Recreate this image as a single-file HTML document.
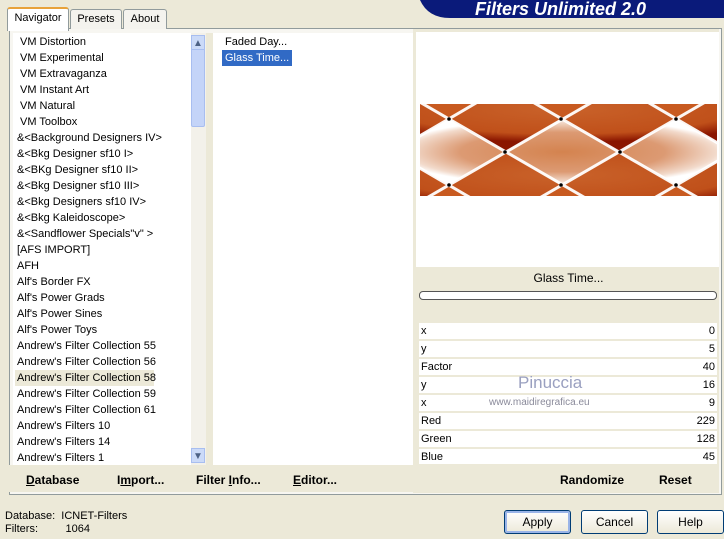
<!DOCTYPE html><html><head><style>
body{margin:0;width:724px;height:539px;background:#ece9d8;font-family:"Liberation Sans",sans-serif;font-size:11px;position:relative;overflow:hidden;color:#000}
.a{position:absolute}
.tab{position:absolute;top:9px;height:19px;border:1px solid #919b9c;border-bottom:none;background:#f4f3ee;text-align:center;line-height:18px;border-radius:3px 3px 0 0}
.li{position:absolute;left:17px;height:16px;line-height:16px;white-space:nowrap}
.row{position:absolute;left:419px;width:298px;height:16px;background:#fff;line-height:16px}
.row span{position:absolute;right:2px}
.row b{font-weight:normal;position:absolute;left:2px}
.btn{position:absolute;top:510px;height:22px;border:1px solid #003c74;border-radius:3px;background:linear-gradient(#fff,#ece9d8);text-align:center;line-height:22px;font-size:12px}
.bb{position:absolute;font-weight:bold;font-size:12px;top:473px}
</style></head><body>
<svg class="a" style="left:420px;top:0" width="304" height="20"><path d="M0 0 H304 V18 H30 Q8 18 0 0Z" fill="#0a1a7a"/><text x="55" y="15" fill="#fff" font-family="Liberation Sans" font-weight="bold" font-style="italic" font-size="18">Filters Unlimited 2.0</text></svg>
<div class="a" style="left:9px;top:28px;width:711px;height:465px;border:1px solid #919b9c;background:#f7f6f1"></div>
<div class="tab" style="left:7px;top:7px;width:60px;height:22px;background:#fff;border-top:2px solid #e8a23a">Navigator</div>
<div class="tab" style="left:70px;width:50px">Presets</div>
<div class="tab" style="left:123px;width:42px">About</div>
<div class="a" style="left:13px;top:33px;width:178px;height:432px;background:#fff"></div>
<div class="a" style="left:191px;top:33px;width:15px;height:432px;background:#f3f1ea"></div>
<div class="a" style="left:191px;top:35px;width:14px;height:92px;background:#c4d4f8;border-radius:2px;border:1px solid #a8bef0;box-sizing:border-box"></div>
<div class="a" style="left:191px;top:35px;width:14px;height:15px;background:#cbdaf8;color:#4d6185;font-size:10px;text-align:center;line-height:15px;border:1px solid #a8bef0;box-sizing:border-box">▲</div>
<div class="a" style="left:191px;top:448px;width:14px;height:15px;background:#cbdaf8;color:#4d6185;font-size:10px;text-align:center;line-height:15px;border:1px solid #a8bef0;box-sizing:border-box">▼</div>
<div class="a" style="left:206px;top:33px;width:7px;height:432px;background:#ece9d8"></div>
<div class="a" style="left:213px;top:33px;width:200px;height:432px;background:#fff"></div>
<div class="a" style="left:222px;top:34px;height:16px;line-height:16px;padding:0 3px">Faded Day...</div>
<div class="a" style="left:222px;top:50px;height:16px;line-height:16px;padding:0 3px;background:#316ac5;color:#fff">Glass Time...</div>
<div class="li" style="top:34px;left:20px">VM Distortion</div>
<div class="li" style="top:50px;left:20px">VM Experimental</div>
<div class="li" style="top:66px;left:20px">VM Extravaganza</div>
<div class="li" style="top:82px;left:20px">VM Instant Art</div>
<div class="li" style="top:98px;left:20px">VM Natural</div>
<div class="li" style="top:114px;left:20px">VM Toolbox</div>
<div class="li" style="top:130px">&amp;&lt;Background Designers IV&gt;</div>
<div class="li" style="top:146px">&amp;&lt;Bkg Designer sf10 I&gt;</div>
<div class="li" style="top:162px">&amp;&lt;BKg Designer sf10 II&gt;</div>
<div class="li" style="top:178px">&amp;&lt;Bkg Designer sf10 III&gt;</div>
<div class="li" style="top:194px">&amp;&lt;Bkg Designers sf10 IV&gt;</div>
<div class="li" style="top:210px">&amp;&lt;Bkg Kaleidoscope&gt;</div>
<div class="li" style="top:226px">&amp;&lt;Sandflower Specials"v" &gt;</div>
<div class="li" style="top:242px">[AFS IMPORT]</div>
<div class="li" style="top:258px">AFH</div>
<div class="li" style="top:274px">Alf's Border FX</div>
<div class="li" style="top:290px">Alf's Power Grads</div>
<div class="li" style="top:306px">Alf's Power Sines</div>
<div class="li" style="top:322px">Alf's Power Toys</div>
<div class="li" style="top:338px">Andrew's Filter Collection 55</div>
<div class="li" style="top:354px">Andrew's Filter Collection 56</div>
<div class="li" style="top:370px;left:15px;padding-left:2px;width:137px;background:#ece9d8">Andrew's Filter Collection 58</div>
<div class="li" style="top:386px">Andrew's Filter Collection 59</div>
<div class="li" style="top:402px">Andrew's Filter Collection 61</div>
<div class="li" style="top:418px">Andrew's Filters 10</div>
<div class="li" style="top:434px">Andrew's Filters 14</div>
<div class="li" style="top:450px;height:14px;overflow:hidden">Andrew's Filters 1</div>
<div class="a" style="left:9px;top:465px;width:404px;height:27px;background:#ece9d8"></div>
<div class="bb" style="left:26px"><u>D</u>atabase</div>
<div class="bb" style="left:117px">I<u>m</u>port...</div>
<div class="bb" style="left:196px">Filter <u>I</u>nfo...</div>
<div class="bb" style="left:293px"><u>E</u>ditor...</div>
<div class="a" style="left:413px;top:29px;width:306px;height:464px;background:#ece9d8"></div>
<div class="a" style="left:416px;top:32px;width:303px;height:235px;background:#fff"></div>
<svg class="a" style="left:420px;top:104px" width="297" height="92">
<defs><radialGradient id="g"><stop offset="0" stop-color="#d4834f"/><stop offset=".6" stop-color="#dc9a73"/><stop offset=".9" stop-color="#f2dacb"/><stop offset="1" stop-color="#fff"/></radialGradient><radialGradient id="d" cy=".35"><stop offset="0" stop-color="#c9622a"/><stop offset=".75" stop-color="#c0501a"/><stop offset="1" stop-color="#8a1500"/></radialGradient></defs>
<rect width="297" height="92" fill="#c85a20"/>
<g transform="translate(-420,-104)">
<path d="M449 119 L505 86 L561 119 L505 152Z M561 119 L620 86 L676 119 L620 152Z M336 119 L392 86 L449 119 L392 152Z M676 119 L733 86 L789 119 L733 152Z" fill="url(#d)"/>
<path d="M449 185 L505 152 L561 185 L505 218Z M561 185 L620 152 L676 185 L620 218Z M336 185 L392 152 L449 185 L392 218Z M676 185 L733 152 L789 185 L733 218Z" fill="url(#d)"/>
<path d="M392 152 L449 119 L505 152 L449 185Z M505 152 L561 119 L620 152 L561 185Z M620 152 L676 119 L733 152 L676 185Z" fill="url(#g)"/>
<g stroke="#fff" stroke-width="3" fill="none" opacity=".95"><path d="M336 185 L505 86 M392 218 L620 86 M505 218 L733 86 M620 218 L733 152 M336 119 L505 218 M392 86 L620 218 M505 86 L733 218 M620 86 L733 152"/></g>
<g fill="#000"><circle cx="449" cy="119" r="1.8"/><circle cx="561" cy="119" r="1.8"/><circle cx="676" cy="119" r="1.8"/><circle cx="505" cy="152" r="1.8"/><circle cx="620" cy="152" r="1.8"/><circle cx="449" cy="185" r="1.8"/><circle cx="561" cy="185" r="1.8"/><circle cx="676" cy="185" r="1.8"/></g>
</g></svg>
<div class="a" style="left:419px;top:271px;width:299px;text-align:center;font-size:12px">Glass Time...</div>
<div class="a" style="left:419px;top:291px;width:296px;height:7px;border:1px solid #555;border-radius:4px;background:#fff"></div>
<div class="row" style="top:323px"><b>x</b><span>0</span></div>
<div class="row" style="top:341px"><b>y</b><span>5</span></div>
<div class="row" style="top:359px"><b>Factor</b><span>40</span></div>
<div class="row" style="top:377px"><b>y</b><span>16</span></div>
<div class="row" style="top:395px"><b>x</b><span>9</span></div>
<div class="row" style="top:413px"><b>Red</b><span>229</span></div>
<div class="row" style="top:431px"><b>Green</b><span>128</span></div>
<div class="row" style="top:449px;height:15px"><b>Blue</b><span>45</span></div>
<div class="a" style="left:518px;top:373px;font-size:17px;color:#9aa0c0">Pinuccia</div>
<div class="a" style="left:489px;top:397px;font-size:10px;color:#8a8a9a">www.maidiregrafica.eu</div>
<div class="bb" style="left:560px;top:473px">Randomize</div>
<div class="bb" style="left:659px;top:473px">Reset</div>
<div class="a" style="left:5px;top:510px">Database:&nbsp; ICNET-Filters</div>
<div class="a" style="left:5px;top:523px">Filters:&nbsp;&nbsp;&nbsp;&nbsp;&nbsp;&nbsp;&nbsp;&nbsp; 1064</div>
<div class="btn" style="left:504px;width:65px;box-shadow:inset 0 0 0 2px #9ab4e8">Apply</div>
<div class="btn" style="left:581px;width:65px">Cancel</div>
<div class="btn" style="left:657px;width:65px">Help</div>
</body></html>
